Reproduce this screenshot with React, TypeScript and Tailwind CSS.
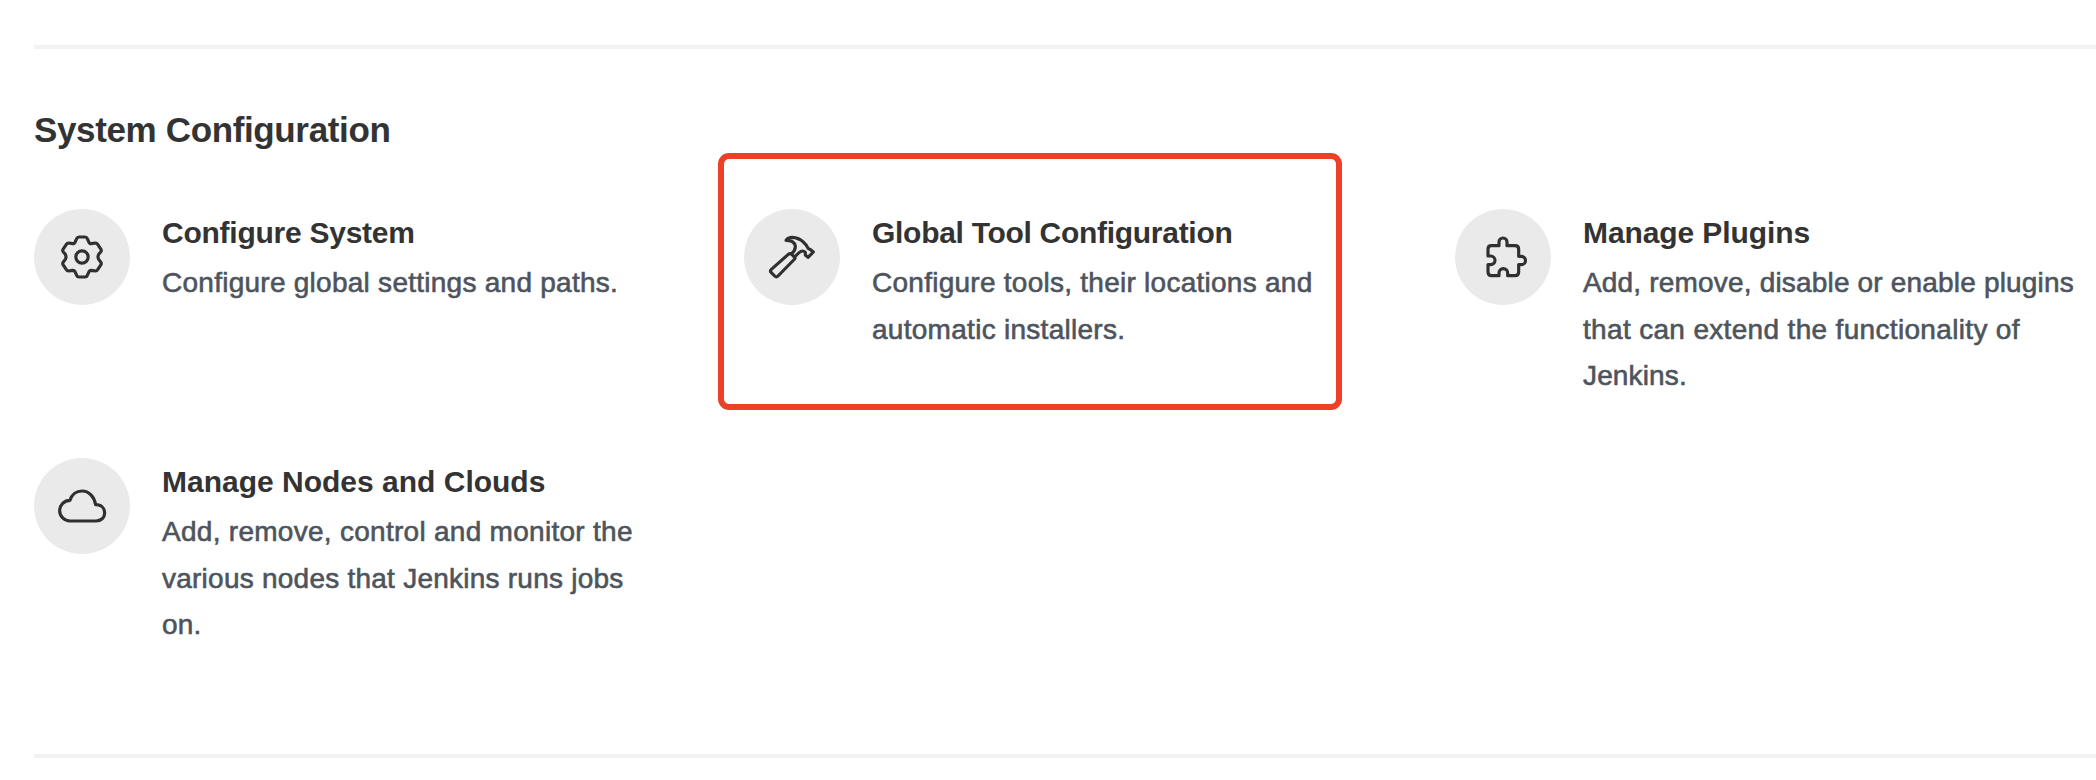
import type { ReactNode } from "react";

const gear = (
  <>
    <path d="M177 126H195Q200 126 202 131L206 140Q208 146 214 146L226 144Q231 144 233 148L243 163Q245 167 242 171L236 178Q232 186 236 193L242 201Q245 205 243 209L233 224Q231 228 226 228L214 226Q208 226 206 232L202 241Q200 246 195 246H177Q172 246 170 241L166 232Q164 226 158 226L146 228Q141 228 139 224L129 209Q127 205 130 201L136 193Q140 186 136 178L130 171Q127 167 129 163L139 148Q141 144 146 144L158 146Q164 146 166 140L170 131Q172 126 177 126Z" />
    <circle cx="186" cy="186" r="18.500" />
  </>
);

const hammer = (
  <>
    <path d="M184 177L194 187Q196 189 194 192L144 243Q139 248 134 243L124 233Q119 228 124 223L175 178Q180 174 184 177Z" />
    <path d="M184 177Q197 166 196 153Q193 136 168 136Q174 127 187 127Q205 128 219 140Q230 149 234 160L240 163L250 171L234 187L226 180V172Q220 166 213 169Q204 174 194 186" />
  </>
);

const puzzle = (
  <path d="M154 152H177V141A12 12 0 0 1 201 141V152H225Q236 152 236 163V184H244A12.500 12.500 0 0 1 244 209H236V231Q236 242 225 242H203V234A13 13 0 0 0 177 234V242H155Q144 242 144 231V209H152A13 13 0 0 0 152 183H144V163Q144 152 154 152Z" />
);

const cloud = (
  <path d="M150 228A31 31 0 0 1 150 166C155 149 169 138 186 138C207 138 223 155 227 179C244 179 254 190 254 204C254 218 243 228 228 228Z" />
);

type Line = { text: string; tracking: string };

type ItemProps = {
  title: string;
  lines: Line[];
  titleClass: string;
  view: string;
  icon: ReactNode;
};

function Item({ title, lines, titleClass, view, icon }: ItemProps) {
  return (
    <a className="flex gap-8">
      <span className="size-24 shrink-0 rounded-full bg-[#eaeaea]">
        <svg
          viewBox={view}
          className="size-24"
          fill="none"
          stroke="#303030"
          strokeWidth="9.500"
          strokeLinejoin="round"
          strokeLinecap="round"
        >
          {icon}
        </svg>
      </span>
      <div className="whitespace-nowrap">
        <h3 className={`text-[30px] leading-[48px] font-bold text-[#333] ${titleClass}`}>{title}</h3>
        <p className="mt-[3px] text-[28px] leading-[46.500px] text-[#4d545d] [-webkit-text-stroke:0.6px_#4d545d]">
          {lines.map((line) => (
            <span key={line.text} className={`block ${line.tracking}`}>
              {line.text}
            </span>
          ))}
        </p>
      </div>
    </a>
  );
}

export default function App() {
  return (
    <main className="h-[780px] w-[2096px] overflow-hidden bg-white pt-[45px] pl-[34px] font-['Liberation_Sans',Arial,sans-serif]">
      <hr className="h-1 border-0 bg-[#f2f2f2]" />
      <h2 className="mt-[60px] text-[35px] leading-[42px] font-bold tracking-[-0.36px] text-[#333]">
        System Configuration
      </h2>
      <section className="mt-[58px] grid h-[545px] grid-cols-[710px_711px_641px] grid-rows-[249px_auto] content-start">
        <Item
          title="Configure System"
          titleClass="tracking-[-0.25px]"
          lines={[{ text: "Configure global settings and paths.", tracking: "tracking-[0.26px]" }]}
          view="42 42 288 288"
          icon={gear}
        />
        <div className="relative">
          <Item
            title="Global Tool Configuration"
            titleClass="tracking-[-0.29px]"
            lines={[
              { text: "Configure tools, their locations and", tracking: "tracking-[0.26px]" },
              { text: "automatic installers.", tracking: "tracking-[0.28px]" },
            ]}
            view="42 42 288 288"
            icon={hammer}
          />
          <div className="pointer-events-none absolute -top-14 -left-[26px] h-[257px] w-[624px] rounded-[11px] border-6 border-[#ee4026]" />
        </div>
        <Item
          title="Manage Plugins"
          titleClass="tracking-[-0.1px]"
          lines={[
            { text: "Add, remove, disable or enable plugins", tracking: "tracking-[0.18px]" },
            { text: "that can extend the functionality of", tracking: "tracking-[0.33px]" },
            { text: "Jenkins.", tracking: "tracking-[0.15px]" },
          ]}
          view="45 42 288 288"
          icon={puzzle}
        />
        <Item
          title="Manage Nodes and Clouds"
          titleClass="tracking-normal"
          lines={[
            { text: "Add, remove, control and monitor the", tracking: "tracking-[0.28px]" },
            { text: "various nodes that Jenkins runs jobs", tracking: "tracking-[0.24px]" },
            { text: "on.", tracking: "tracking-[0.2px]" },
          ]}
          view="42 39 288 288"
          icon={cloud}
        />
      </section>
      <hr className="h-1 border-0 bg-[#f2f2f2]" />
    </main>
  );
}
